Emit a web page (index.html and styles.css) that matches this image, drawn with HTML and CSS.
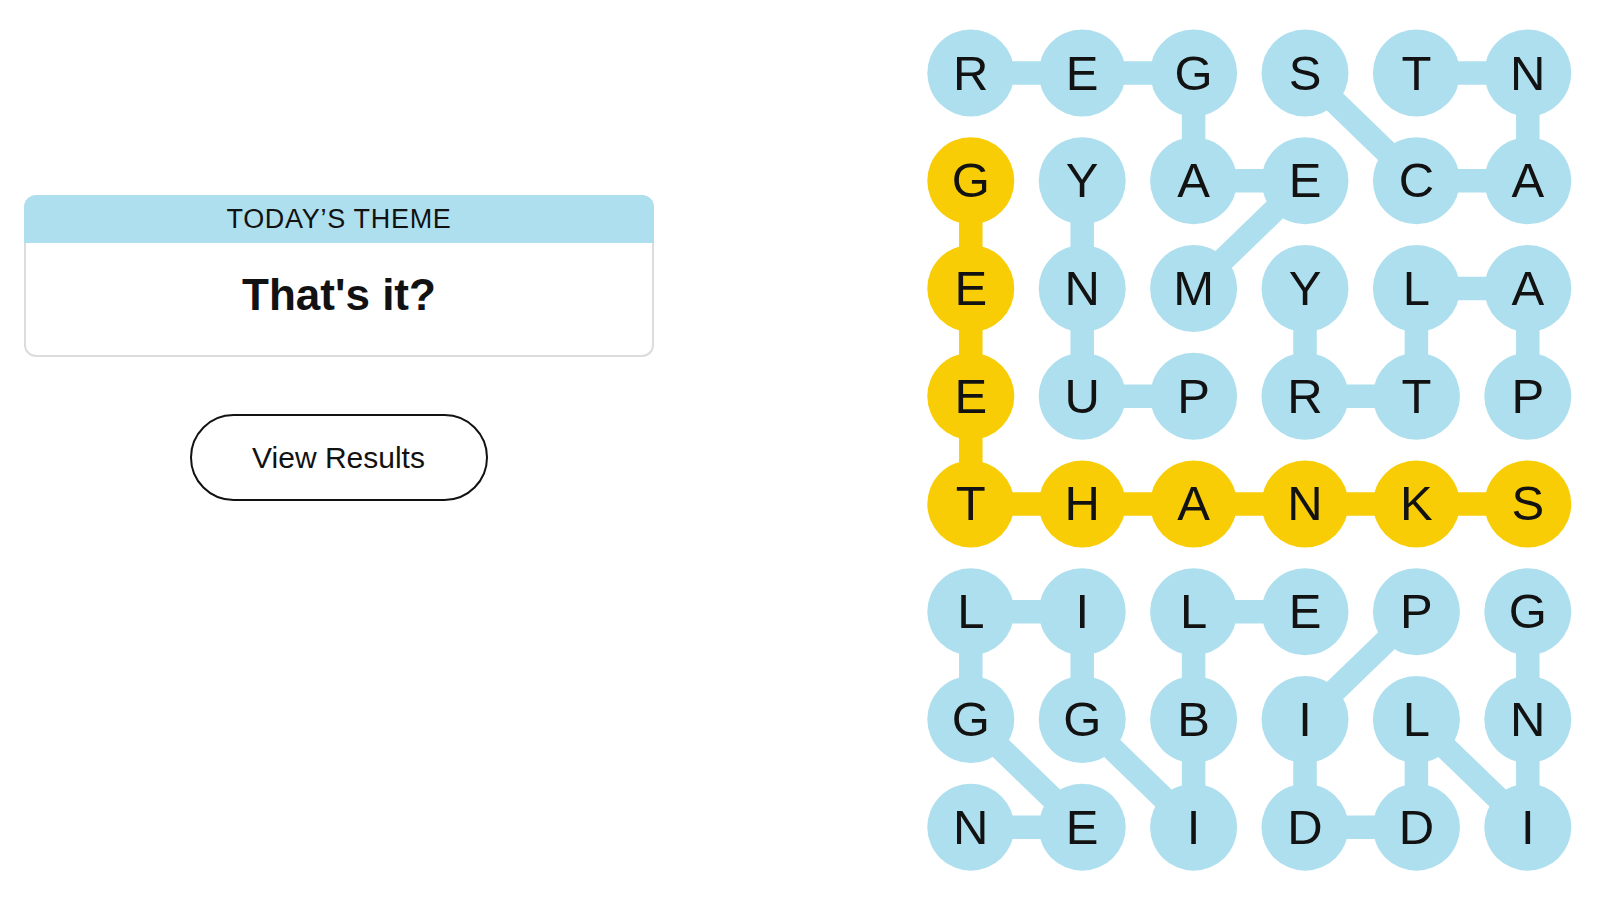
FILE: index.html
```html
<!DOCTYPE html>
<html lang="en">

<head>
    <meta charset="UTF-8">
    <meta name="viewport" content="width=device-width, initial-scale=1.0">
    <title>Strands</title>
    <link rel="stylesheet" href="styles.css">
</head>

<body>
    <main class="game">
        <section class="side">
            <div class="theme-card">
                <div class="theme-header">TODAY’S THEME</div>
                <div class="theme-body">
                    <h1 class="theme-title">That's it?</h1>
                </div>
            </div>
            <button class="results-btn">View Results</button>
        </section>

        <svg id="board" class="board" width="680" height="870" viewBox="0 0 680 870"></svg>
    </main>

    <script src="script.js"></script>
</body>

</html>
```

FILE: styles.css
```css
body {
    margin: 0;
    background-color: #fff;
    color: #121212;
    font-family: "Liberation Sans", Arial, sans-serif;
}

.game {
    display: flex;
    align-items: flex-start;
}

.side {
    display: flex;
    flex-direction: column;
    align-items: center;
    width: 630px;
    margin-left: 24px;
    margin-top: 195px;
}

.theme-card {
    width: 100%;
}

.theme-header {
    height: 48px;
    line-height: 48px;
    text-align: center;
    background-color: #aedfee;
    border-radius: 12px 12px 0 0;
    font-size: 27px;
    letter-spacing: 0.7px;
}

.theme-body {
    box-sizing: border-box;
    height: 114px;
    padding-top: 30px;
    border: 2px solid #dcdcdc;
    border-top: none;
    border-radius: 0 0 12px 12px;
    text-align: center;
}

.theme-title {
    margin: 0;
    font-size: 44px;
    line-height: 1;
    font-weight: bold;
}

.results-btn {
    margin-top: 57px;
    margin-right: 1px;
    width: 298px;
    height: 87px;
    border: 2px solid #121212;
    border-radius: 44px;
    background-color: #fff;
    color: #121212;
    font-family: inherit;
    font-size: 30px;
    cursor: pointer;
}

.board {
    margin-left: 258px;
    margin-top: 20px;
}

.link {
    stroke-width: 23.5;
}

.cell text {
    font-family: "Liberation Sans", Arial, sans-serif;
    font-size: 49px;
    fill: #121212;
    text-anchor: middle;
}

.found .link {
    stroke: #aedfee;
}

.found circle {
    fill: #aedfee;
}

.spangram .link {
    stroke: #f8cd05;
}

.spangram circle {
    fill: #f8cd05;
}
```

FILE: script.js
```javascript
const grid = ["REGSTN", "GYAECA", "ENMYLA", "EUPRTP", "THANKS", "LILEPG", "GGBILN", "NEIDDI"];

// words found, each as a list of [row, col]
const words = [
    { path: [[2, 2], [1, 3], [1, 2], [0, 2], [0, 1], [0, 0]] },
    { path: [[0, 3], [1, 4], [1, 5], [0, 5], [0, 4]] },
    { path: [[3, 2], [3, 1], [2, 1], [1, 1]] },
    { path: [[3, 5], [2, 5], [2, 4], [3, 4], [3, 3], [2, 3]] },
    { path: [[7, 0], [7, 1], [6, 0], [5, 0], [5, 1], [6, 1], [7, 2], [6, 2], [5, 2], [5, 3]] },
    { path: [[5, 4], [6, 3], [7, 3], [7, 4], [6, 4], [7, 5], [6, 5], [5, 5]] },
    { path: [[1, 0], [2, 0], [3, 0], [4, 0], [4, 1], [4, 2], [4, 3], [4, 4], [4, 5]], spangram: true }
];

const board = document.getElementById("board");
const NS = "http://www.w3.org/2000/svg";

function cx(col) { return 58.8 + col * 111.4; }
function cy(row) { return 53 + row * 107.74; }

function el(name, attrs) {
    const node = document.createElementNS(NS, name);
    for (const key in attrs) node.setAttribute(key, attrs[key]);
    return node;
}

words.forEach(word => {
    const g = el("g", { class: word.spangram ? "spangram" : "found" });

    for (let i = 1; i < word.path.length; i++) {
        const [r1, c1] = word.path[i - 1];
        const [r2, c2] = word.path[i];
        g.appendChild(el("line", {
            class: "link",
            x1: cx(c1), y1: cy(r1), x2: cx(c2), y2: cy(r2)
        }));
    }

    word.path.forEach(([r, c]) => {
        const cell = el("g", { class: "cell" });
        cell.appendChild(el("circle", { cx: cx(c), cy: cy(r), r: 43.5 }));
        const t = el("text", { x: cx(c), y: cy(r) + 16.5 });
        t.textContent = grid[r][c];
        cell.appendChild(t);
        g.appendChild(cell);
    });

    board.appendChild(g);
});
```
